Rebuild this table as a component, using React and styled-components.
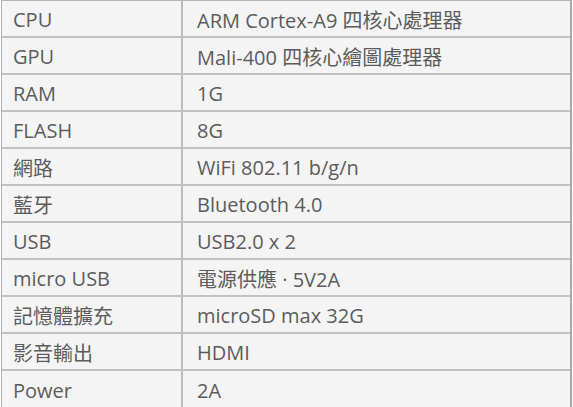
import React from "react";
import styled, { createGlobalStyle } from "styled-components";

const GlobalStyle = createGlobalStyle`
    html, body {
        margin: 0;
        padding: 0;
        background: #ffffff;
    }
    body {
        font-family: "Open Sans", "Noto Sans CJK TC", sans-serif;
    }
`;

const specs = [
    ["CPU", "ARM Cortex-A9 四核心處理器"],
    ["GPU", "Mali-400 四核心繪圖處理器"],
    ["RAM", "1G"],
    ["FLASH", "8G"],
    ["網路", "WiFi 802.11 b/g/n"],
    ["藍牙", "Bluetooth 4.0"],
    ["USB", "USB2.0 x 2"],
    ["micro USB", "電源供應 · 5V2A"],
    ["記憶體擴充", "microSD max 32G"],
    ["影音輸出", "HDMI"],
    ["Power", "2A"],
];

const App = () => {
    return (
        <>
            <GlobalStyle />
            <SpecTable>
                {specs.map(([label, value]) => (
                    <SpecRow key={label}>
                        <LabelCell>{label}</LabelCell>
                        <ValueCell>{value}</ValueCell>
                    </SpecRow>
                ))}
            </SpecTable>
        </>
    );
};

export default App;

const SpecTable = styled.div`
    width: 571px;
    margin: 0 0 0 1px;
    background: #f4f4f4;
    border-top: 1px solid #b4b4b4;
    border-left: 1px solid #b4b4b4;
    border-right: 2px solid #a8a8a8;
    border-bottom: 2px solid #a8a8a8;
    box-sizing: border-box;
    display: flex;
    flex-direction: column;
`;

const SpecRow = styled.div`
    display: grid;
    grid-template-columns: 181px 1fr;
    height: 37px;
    box-sizing: border-box;
    border-bottom: 2px solid #c2c2c2;

    &:last-child {
        border-bottom: none;
        height: 36px;
    }
`;

const Cell = styled.div`
    display: flex;
    align-items: center;
    padding-left: 11px;
    padding-top: 2px;
    font-size: 20px;
    color: #5c5c5c;
    white-space: nowrap;
`;

const LabelCell = styled(Cell)`
    border-right: 2px solid #bdbdbd;
`;

const ValueCell = styled(Cell)`
    padding-left: 14px;
`;
